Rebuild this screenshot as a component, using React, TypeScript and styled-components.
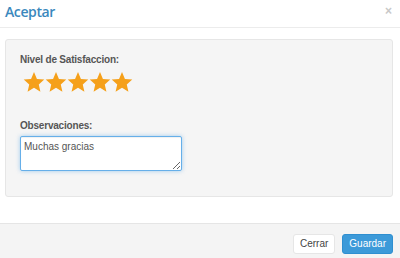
import React from "react";
import styled, { createGlobalStyle } from "styled-components";

const Global = createGlobalStyle`
  html, body { margin: 0; padding: 0; background: #fff; }
  body { width: 400px; height: 258px; overflow: hidden; font-family: "Liberation Sans", Arial, sans-serif; }
  * { box-sizing: border-box; }
`;

const Modal = styled.div`
  width: 400px;
  height: 258px;
  display: flex;
  flex-direction: column;
  background: #fff;
`;

const Header = styled.div`
  height: 28px;
  display: flex;
  align-items: flex-start;
  justify-content: space-between;
  padding: 1px 8px 0 5px;
  border-bottom: 1px solid #ececec;
`;

const Title = styled.h4`
  margin: 0;
  font-family: "Open Sans", sans-serif;
  font-weight: 600;
  font-size: 14px;
  letter-spacing: -0.4px;
  line-height: 22px;
  color: #3a88bd;
`;

const Close = styled.span`
  font-family: "Liberation Sans", Arial, sans-serif;
  font-weight: bold;
  font-size: 12px;
  line-height: 20px;
  color: #c8c8c8;
`;

const Body = styled.div`
  flex: 1;
  padding: 11px 7px 0 5px;
`;

const Well = styled.div`
  height: 158px;
  background: #f5f5f5;
  border: 1px solid #e6e6e6;
  border-radius: 3px;
  padding: 14px 14px;
  display: flex;
  flex-direction: column;
`;

const Label = styled.label<{ $gap?: number }>`
  display: block;
  font-family: "Liberation Sans", Arial, sans-serif;
  font-weight: bold;
  font-size: 10px;
  letter-spacing: -0.2px;
  line-height: 12px;
  color: #555;
  margin-top: ${(p) => p.$gap ?? 0}px;
`;

const Stars = styled.div`
  display: flex;
  margin: 5px 0 0 3px;
  height: 22px;
`;

const Star = styled.svg`
  width: 22px;
  height: 22px;
  display: block;
`;

const TextArea = styled.textarea`
  display: block;
  margin-top: 4px;
  width: 162px;
  height: 35px;
  padding: 3px 3px;
  border: 1px solid #66afe9;
  border-radius: 2px;
  box-shadow: inset 0 1px 1px rgba(0,0,0,0.06), 0 0 4px rgba(102,175,233,0.6);
  outline: none;
  font-family: "Liberation Sans", Arial, sans-serif;
  font-size: 10px;
  line-height: 13px;
  color: #555;
  background: #fff;
`;

const Footer = styled.div`
  height: 35px;
  border-top: 1px solid #e5e5e5;
  background: #f4f4f4;
  display: flex;
  justify-content: flex-end;
  align-items: flex-start;
  gap: 7px;
  padding: 10px 7px 0 0;
`;

const Button = styled.button<{ $primary?: boolean }>`
  height: 20px;
  padding: 0 6px;
  font-family: "Liberation Sans", Arial, sans-serif;
  font-size: 10px;
  line-height: 18px;
  border-radius: 3px;
  border: 1px solid ${(p) => (p.$primary ? "#2f8fd0" : "#e6e6e6")};
  background: ${(p) => (p.$primary ? "#3c9ad9" : "#fff")};
  color: ${(p) => (p.$primary ? "#fff" : "#444")};
`;

const StarIcon = () => (
  <Star viewBox="0 0 24 24">
    <polygon
      points="12,1.2 15.2,8.6 23.2,9.3 17.2,14.6 19,22.5 12,18.3 5,22.5 6.8,14.6 0.8,9.3 8.8,8.6"
      fill="#f5a01a"
    />
  </Star>
);

export default function App() {
  return (
    <>
      <Global />
      <Modal>
        <Header>
          <Title>Aceptar</Title>
          <Close>×</Close>
        </Header>
        <Body>
          <Well>
            <Label>Nivel de Satisfaccion:</Label>
            <Stars>
              {[0, 1, 2, 3, 4].map((i) => (
                <StarIcon key={i} />
              ))}
            </Stars>
            <Label $gap={27}>Observaciones:</Label>
            <TextArea defaultValue="Muchas gracias" autoFocus />
          </Well>
        </Body>
        <Footer>
          <Button>Cerrar</Button>
          <Button $primary>Guardar</Button>
        </Footer>
      </Modal>
    </>
  );
}
